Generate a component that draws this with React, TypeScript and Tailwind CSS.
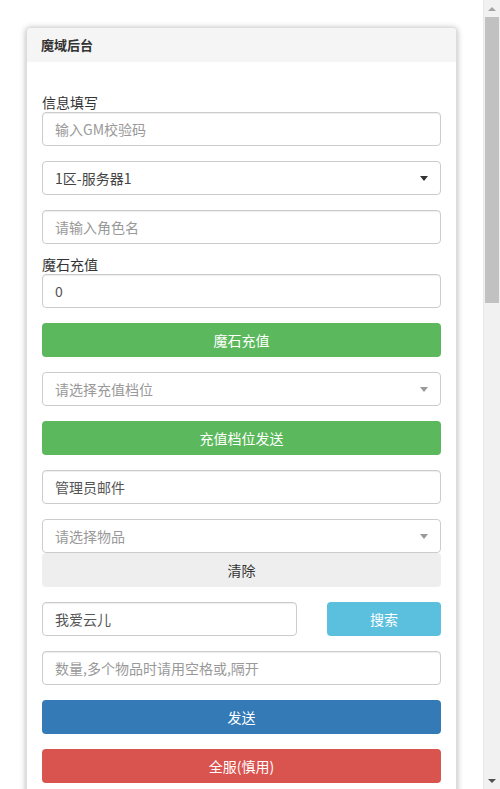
import { ReactNode } from "react";

const font = {
  fontFamily: '"Noto Sans CJK SC", "Liberation Sans", Arial, sans-serif',
};

function TextInput({ placeholder, value }: { placeholder?: string; value?: string }) {
  return (
    <input
      className="block h-[34px] w-full rounded-[4px] border border-[#ccc] bg-white px-3 text-[14px] text-[#555] shadow-[inset_0_1px_1px_rgba(0,0,0,0.075)] outline-none placeholder:text-[#999]"
      placeholder={placeholder}
      defaultValue={value}
    />
  );
}

function FakeSelect({ text, placeholder }: { text: string; placeholder?: boolean }) {
  return (
    <div className="flex h-[34px] w-full items-center justify-between rounded-[4px] border border-[#ccc] bg-white pl-3 pr-[12px]">
      <span className={placeholder ? "text-[14px] text-[#999]" : "text-[14px] text-[#444]"}>{text}</span>
      <span
        className={
          placeholder
            ? "h-0 w-0 border-x-[4px] border-t-[5px] border-x-transparent border-t-[#999]"
            : "h-0 w-0 border-x-[4px] border-t-[5px] border-x-transparent border-t-[#333]"
        }
      />
    </div>
  );
}

function Btn({ children, className }: { children: ReactNode; className: string }) {
  return (
    <button
      className={`flex h-[34px] w-full items-center justify-center rounded-[4px] text-[14px] ${className}`}
    >
      {children}
    </button>
  );
}

// the page scrolls; headless hides the real bar so draw one
function Scrollbar() {
  return (
    <div className="flex h-[789px] w-[17px] shrink-0 flex-col border-l border-[#e8e8e8] bg-[#f1f1f1]">
      <div className="flex h-[17px] items-center justify-center">
        <span className="h-0 w-0 border-x-[4px] border-b-[4px] border-x-transparent border-b-[#a3a3a3]" />
      </div>
      <div className="mx-[1px] h-[286px] bg-[#c1c1c1]" />
      <div className="flex-1" />
      <div className="flex h-[17px] items-center justify-center">
        <span className="h-0 w-0 border-x-[4px] border-t-[4px] border-x-transparent border-t-[#505050]" />
      </div>
    </div>
  );
}

export default function App() {
  return (
    <div className="flex h-[789px] overflow-hidden bg-white" style={font}>
      <div className="min-w-0 flex-1 px-[26px] pt-[27px]">
        <div className="rounded-[4px] border border-[#ddd] bg-white shadow-[0_1px_6px_rgba(0,0,0,0.3)]">
          <div className="flex h-[34px] items-center rounded-t-[4px] bg-[#f5f5f5] px-[14px] text-[13px] font-bold text-[#333]">
            魔域后台
          </div>
          <div className="px-[15px] pb-[15px] pt-[30px] text-[#333]">
            <div className="text-[14px] leading-[20px]">信息填写</div>
            <TextInput placeholder="输入GM校验码" />
            <div className="mt-[15px]">
              <FakeSelect text="1区-服务器1" />
            </div>
            <div className="mt-[15px]">
              <TextInput placeholder="请输入角色名" />
            </div>
            <div className="mt-[10px] text-[14px] leading-[20px]">魔石充值</div>
            <TextInput value="0" />
            <div className="mt-[15px]">
              <Btn className="bg-[#5cb85c] text-white">魔石充值</Btn>
            </div>
            <div className="mt-[15px]">
              <FakeSelect text="请选择充值档位" placeholder />
            </div>
            <div className="mt-[15px]">
              <Btn className="bg-[#5cb85c] text-white">充值档位发送</Btn>
            </div>
            <div className="mt-[15px]">
              <TextInput value="管理员邮件" />
            </div>
            <div className="mt-[15px]">
              <FakeSelect text="请选择物品" placeholder />
              <Btn className="bg-[#eee] text-[#333]">清除</Btn>
            </div>
            <div className="mt-[15px] flex gap-[30px]">
              <div className="flex-1">
                <TextInput value="我爱云儿" />
              </div>
              <div className="w-[114px]">
                <Btn className="bg-[#5bc0de] text-white">搜索</Btn>
              </div>
            </div>
            <div className="mt-[15px]">
              <TextInput placeholder="数量,多个物品时请用空格或,隔开" />
            </div>
            <div className="mt-[15px]">
              <Btn className="bg-[#337ab7] text-white">发送</Btn>
            </div>
            <div className="mt-[15px]">
              <Btn className="bg-[#d9534f] text-white">全服(慎用)</Btn>
            </div>
          </div>
        </div>
      </div>
      <Scrollbar />
    </div>
  );
}
